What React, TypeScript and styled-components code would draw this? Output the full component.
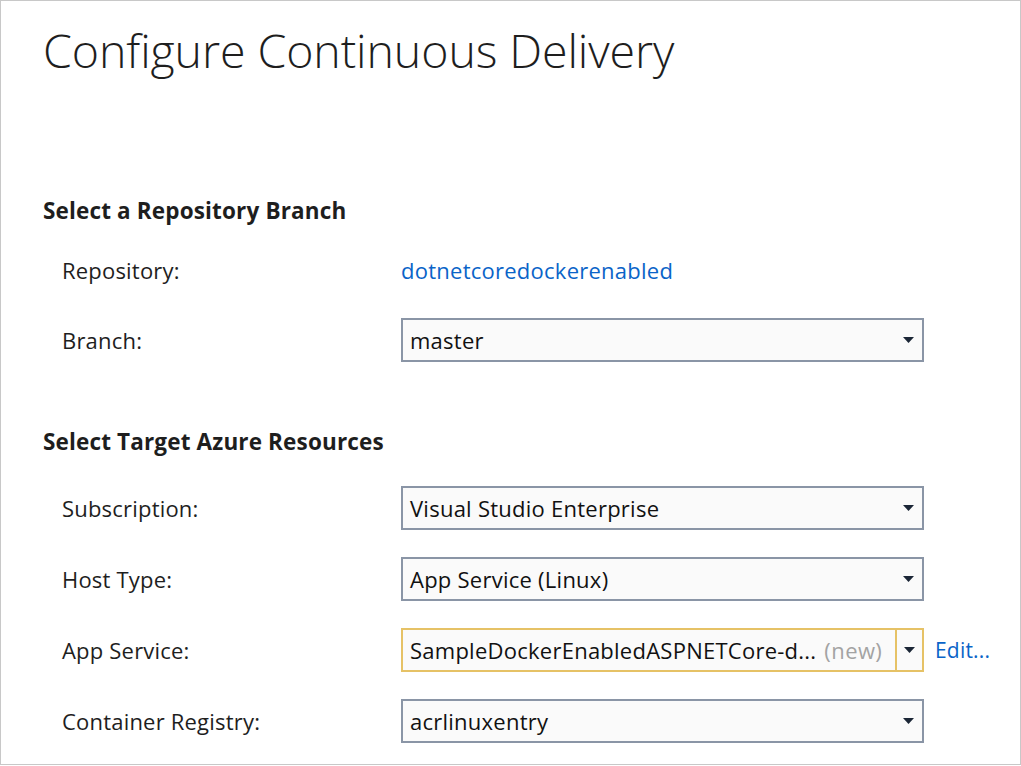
import React from "react";
import styled, { createGlobalStyle } from "styled-components";

const GlobalStyle = createGlobalStyle`
  html, body {
    margin: 0;
    padding: 0;
    background: #ffffff;
  }
  body {
    font-family: "Open Sans", "Noto Sans", "Liberation Sans", sans-serif;
    color: #1e1e1e;
  }
`;

const Frame = styled.div`
  box-sizing: border-box;
  width: 1021px;
  height: 765px;
  border: 1px solid #c8c8c8;
  background: #ffffff;
  padding: 21px 0 0 42px;
  overflow: hidden;
`;

const Title = styled.h1`
  margin: 0;
  font-size: 46.5px;
  font-weight: 300;
  line-height: 56px;
  color: #1e1e1e;
  letter-spacing: -0.1px;
`;

const Section = styled.section<{ $top: number }>`
  margin-top: ${(p) => p.$top}px;
`;

const SectionHeading = styled.h2`
  margin: 0;
  font-size: 22.5px;
  font-weight: 700;
  line-height: 28px;
  color: #1e1e1e;
  letter-spacing: 0.15px;
`;

const FieldGrid = styled.div<{ $top: number; $gap: number }>`
  display: grid;
  grid-template-columns: 339px 523px auto;
  row-gap: ${(p) => p.$gap}px;
  margin-top: ${(p) => p.$top}px;
  padding-left: 19px;
  align-items: center;
`;

const Label = styled.div`
  font-size: 22px;
  line-height: 44px;
  letter-spacing: 0.2px;
  color: #1e1e1e;
`;

const Link = styled.a`
  font-size: 22px;
  line-height: 44px;
  letter-spacing: 0.25px;
  color: #0a64c8;
  text-decoration: none;
  cursor: pointer;
`;

const SelectBox = styled.div<{ $focus?: boolean }>`
  box-sizing: border-box;
  height: 44px;
  display: flex;
  align-items: stretch;
  background: #fafafa;
  border: 2px solid ${(p) => (p.$focus ? "#e6c266" : "#8a95a6")};
`;

const SelectValue = styled.div`
  flex: 1;
  display: flex;
  align-items: center;
  padding-left: 7px;
  font-size: 22px;
  letter-spacing: 0.25px;
  color: #111111;
  white-space: nowrap;
  overflow: hidden;
`;

const Muted = styled.span`
  color: #a3a3a3;
  margin-left: 8px;
  letter-spacing: 0.4px;
`;

const ArrowButton = styled.div<{ $split?: boolean }>`
  width: ${(p) => (p.$split ? 25 : 28)}px;
  display: flex;
  align-items: center;
  justify-content: center;
  border-left: ${(p) => (p.$split ? "2px solid #e6c266" : "none")};
`;

const EditLink = styled.a`
  margin-left: 11px;
  font-size: 21px;
  letter-spacing: 0.2px;
  color: #0a64c8;
  text-decoration: none;
  white-space: nowrap;
`;

const Caret = () => (
  <svg width="11" height="6" viewBox="0 0 11 6">
    <path d="M0 0 H11 L5.5 6 Z" fill="#1b2636" />
  </svg>
);

type SelectProps = {
  value: string;
  suffix?: string;
  focus?: boolean;
};

const Select = ({ value, suffix, focus }: SelectProps) => (
  <SelectBox $focus={focus}>
    <SelectValue>
      {value}
      {suffix && <Muted>{suffix}</Muted>}
    </SelectValue>
    <ArrowButton $split={focus}>
      <Caret />
    </ArrowButton>
  </SelectBox>
);

const Empty = styled.span``;

export default function App() {
  return (
    <>
      <GlobalStyle />
      <Frame>
        <Title>Configure Continuous Delivery</Title>

        <Section $top={119}>
          <SectionHeading>Select a Repository Branch</SectionHeading>
          <FieldGrid $top={23} $gap={26}>
            <Label>Repository:</Label>
            <Link>dotnetcoredockerenabled</Link>
            <Empty />

            <Label>Branch:</Label>
            <Select value="master" />
            <Empty />
          </FieldGrid>
        </Section>

        <Section $top={66}>
          <SectionHeading>Select Target Azure Resources</SectionHeading>
          <FieldGrid $top={30} $gap={27}>
            <Label>Subscription:</Label>
            <Select value="Visual Studio Enterprise" />
            <Empty />

            <Label>Host Type:</Label>
            <Select value="App Service (Linux)" />
            <Empty />

            <Label>App Service:</Label>
            <Select value="SampleDockerEnabledASPNETCore-d..." suffix="(new)" focus />
            <EditLink>Edit...</EditLink>

            <Label>Container Registry:</Label>
            <Select value="acrlinuxentry" />
            <Empty />
          </FieldGrid>
        </Section>
      </Frame>
    </>
  );
}
